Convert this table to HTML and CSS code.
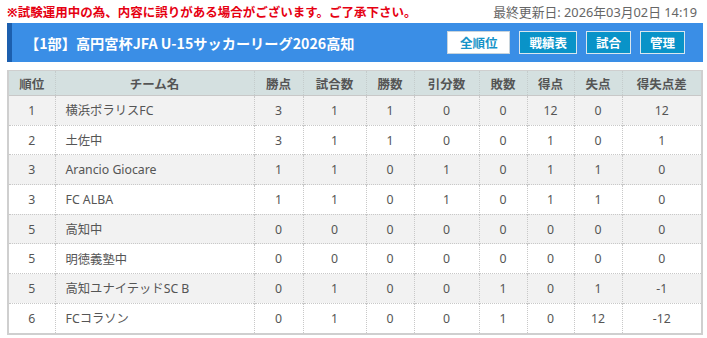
FILE: index.html
```html
<!DOCTYPE html>
<html lang="ja">
<head>
<meta charset="utf-8">
<link rel="stylesheet" href="styles.css">
</head>
<body>
<div class="notice">
  <span class="warn">※試験運用中の為、内容に誤りがある場合がございます。ご了承下さい。</span>
  <span class="updated">最終更新日: 2026年03月02日 14:19</span>
</div>
<div class="titlebar">
  <h1 class="title">【1部】高円宮杯JFA U-15サッカーリーグ2026高知</h1>
  <nav class="btns">
    <a class="btn active">全順位</a>
    <a class="btn">戦績表</a>
    <a class="btn">試合</a>
    <a class="btn">管理</a>
  </nav>
</div>
<table class="standings">
  <colgroup>
    <col class="c-rank"><col class="c-team"><col class="c-pts"><col class="c-gp"><col class="c-w"><col class="c-d"><col class="c-l"><col class="c-gf"><col class="c-ga"><col class="c-gd">
  </colgroup>
  <thead>
    <tr><th>順位</th><th>チーム名</th><th>勝点</th><th>試合数</th><th>勝数</th><th>引分数</th><th>敗数</th><th>得点</th><th>失点</th><th>得失点差</th></tr>
  </thead>
  <tbody>
    <tr><td>1</td><td class="team">横浜ポラリスFC</td><td>3</td><td>1</td><td>1</td><td>0</td><td>0</td><td>12</td><td>0</td><td>12</td></tr>
    <tr><td>2</td><td class="team">土佐中</td><td>3</td><td>1</td><td>1</td><td>0</td><td>0</td><td>1</td><td>0</td><td>1</td></tr>
    <tr><td>3</td><td class="team">Arancio Giocare</td><td>1</td><td>1</td><td>0</td><td>1</td><td>0</td><td>1</td><td>1</td><td>0</td></tr>
    <tr><td>3</td><td class="team">FC ALBA</td><td>1</td><td>1</td><td>0</td><td>1</td><td>0</td><td>1</td><td>1</td><td>0</td></tr>
    <tr><td>5</td><td class="team">高知中</td><td>0</td><td>0</td><td>0</td><td>0</td><td>0</td><td>0</td><td>0</td><td>0</td></tr>
    <tr><td>5</td><td class="team">明徳義塾中</td><td>0</td><td>0</td><td>0</td><td>0</td><td>0</td><td>0</td><td>0</td><td>0</td></tr>
    <tr><td>5</td><td class="team">高知ユナイテッドSC B</td><td>0</td><td>1</td><td>0</td><td>0</td><td>1</td><td>0</td><td>1</td><td>-1</td></tr>
    <tr><td>6</td><td class="team">FCコラソン</td><td>0</td><td>1</td><td>0</td><td>0</td><td>1</td><td>0</td><td>12</td><td>-12</td></tr>
  </tbody>
</table>
</body>
</html>
```
FILE: styles.css
```css
html, body {
  margin: 0;
  padding: 0;
  background: #fff;
}
body {
  padding: 0 4px 0 7px;
  font-family: "Noto Sans", "Noto Sans CJK JP", sans-serif;
  color: #555;
}
.notice {
  display: flex;
  justify-content: space-between;
  align-items: center;
  height: 23px;
  padding-right: 6px;
}
.warn {
  color: #e60012;
  font-weight: bold;
  font-size: 12.5px;
}
.updated {
  color: #666;
  font-size: 12.8px;
}
.titlebar {
  display: flex;
  align-items: center;
  justify-content: space-between;
  height: 39px;
  background: #3a8ee6;
  border-left: 5px solid #1c5fae;
  padding: 0 18px 0 13px;
  box-sizing: border-box;
}
.title {
  margin: 0;
  color: #fff;
  font-size: 14.2px;
  font-weight: bold;
  font-family: "Noto Sans CJK JP", sans-serif;
}
.btns {
  display: flex;
  gap: 9px;
}
.btn {
  display: block;
  height: 23px;
  line-height: 21px;
  box-sizing: border-box;
  padding: 0 9px;
  border: 1px solid #d9e6ee;
  background: #0993c8;
  color: #fff;
  font-size: 12.5px;
  font-weight: bold;
  font-family: "Noto Sans CJK JP", sans-serif;
}
.btn.active {
  background: #fff;
  color: #1593c8;
  border-color: #c8d4dc;
  padding: 0 12px;
}
.standings {
  margin-top: 8px;
  width: 696px;
  border-collapse: collapse;
  table-layout: fixed;
  font-size: 12.3px;
  border: 2px solid #cfcfcf;
  border-top-width: 1px;
}
.c-rank { width: 47px; }
.c-team { width: 199px; }
.c-pts { width: 49px; }
.c-gp { width: 63px; }
.c-w { width: 48px; }
.c-d { width: 65px; }
.c-l { width: 48px; }
.c-gf { width: 47px; }
.c-ga { width: 48px; }
.c-gd { width: auto; }
.standings th {
  background: #d4e0e0;
  color: #555;
  font-weight: bold;
  height: 24px;
  padding: 0;
  border-left: 1px dotted #c4cccc;
  border-bottom: 1px solid #c8c8c8;
  font-family: "Noto Sans CJK JP", sans-serif;
  font-size: 12.5px;
}
.standings td {
  height: 28.7px;
  padding: 0;
  text-align: center;
  border-left: 1px dotted #c8c8c8;
  border-top: 1px dotted #c8c8c8;
}
.standings tbody tr:first-child td {
  border-top: none;
}
.standings td.team {
  text-align: left;
  padding-left: 10px;
}
.standings tbody tr:nth-child(odd) {
  background: #f2f2f2;
}
```
